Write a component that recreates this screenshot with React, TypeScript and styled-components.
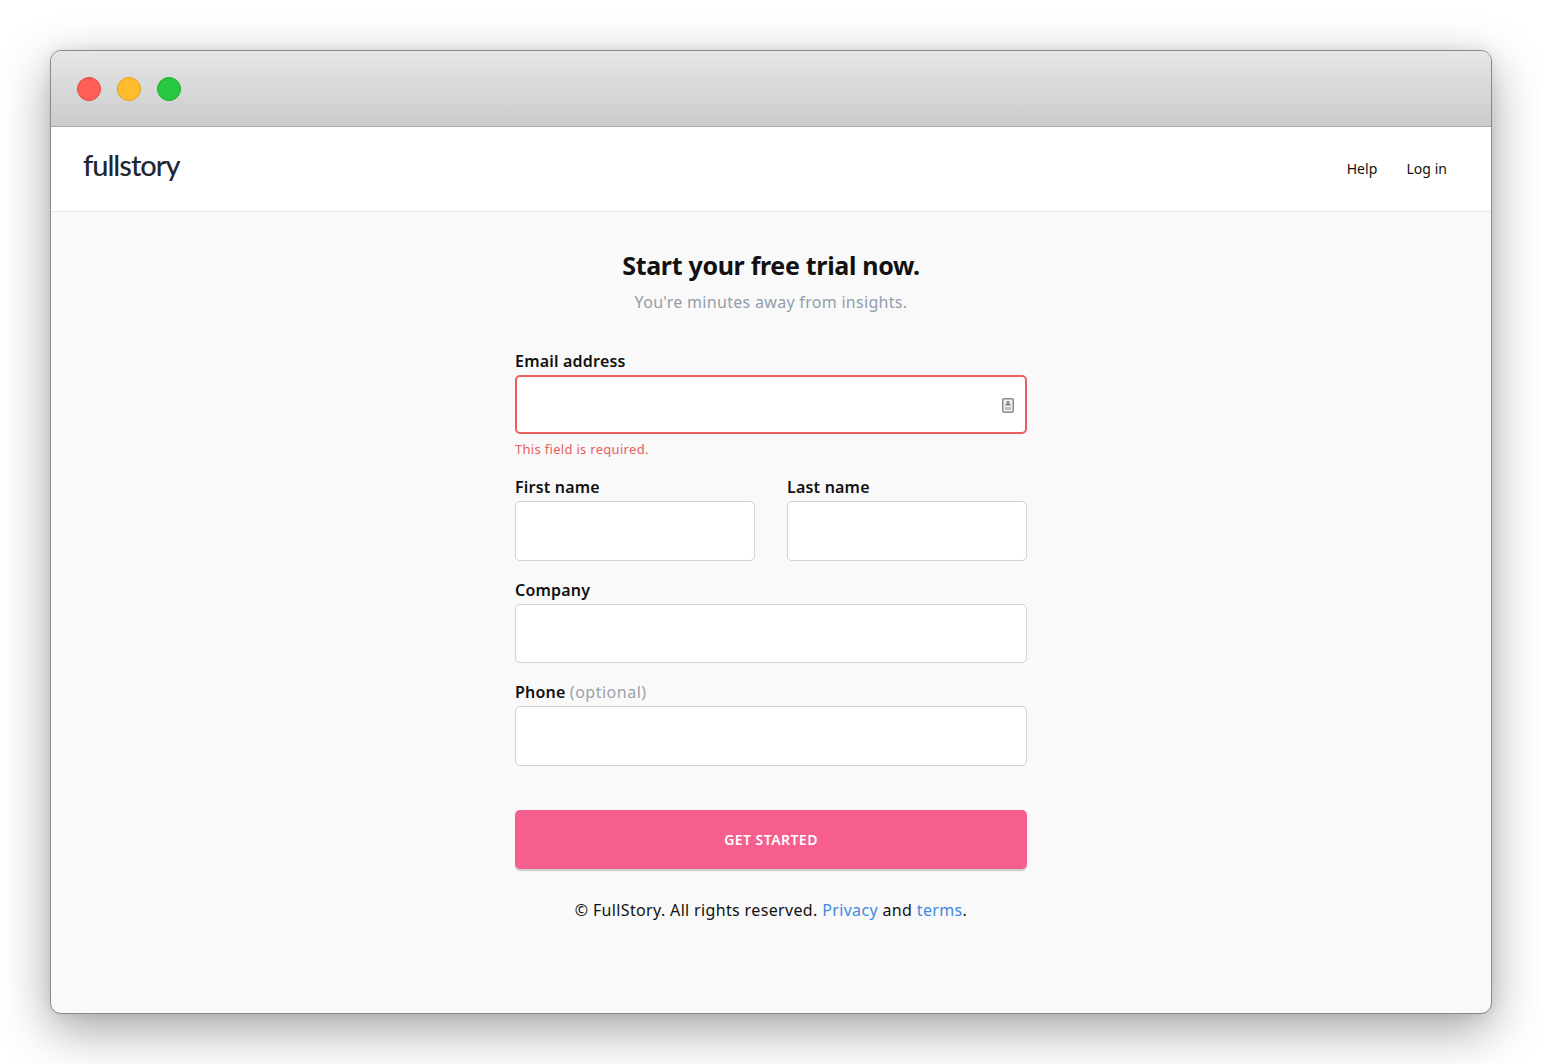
import React from "react";
import styled, { createGlobalStyle } from "styled-components";

const GlobalStyle = createGlobalStyle`
  html, body {
    margin: 0;
    padding: 0;
    background: #ffffff;
    overflow: hidden;
  }
  * {
    box-sizing: border-box;
  }
`;

const Page = styled.div`
  width: 1542px;
  height: 1064px;
  padding: 50px;
  font-family: "Noto Sans", "Open Sans", sans-serif;
`;

const Window = styled.div`
  width: 1442px;
  height: 964px;
  display: flex;
  flex-direction: column;
  border: 1px solid #8a8a8a;
  border-radius: 11px;
  overflow: hidden;
  background: #f9f9f9;
  box-shadow: 0 16px 50px rgba(0, 0, 0, 0.36), 0 0 12px rgba(0, 0, 0, 0.08);
`;

const TitleBar = styled.div`
  flex: none;
  height: 76px;
  display: flex;
  align-items: center;
  gap: 16px;
  padding-left: 26px;
  background: linear-gradient(#e6e6e6, #cbcbcb);
  border-bottom: 1px solid #a8a8a8;
`;

const Light = styled.span<{ $fill: string; $edge: string }>`
  width: 24px;
  height: 24px;
  border-radius: 50%;
  background: ${(p) => p.$fill};
  border: 1px solid ${(p) => p.$edge};
`;

const Nav = styled.header`
  flex: none;
  height: 85px;
  display: flex;
  align-items: center;
  justify-content: space-between;
  padding: 0 44px 0 32px;
  background: #ffffff;
  border-bottom: 1px solid #e6e6e6;
`;

const Logo = styled.div`
  font-family: Lato, sans-serif;
  font-size: 29px;
  font-weight: 500;
  letter-spacing: -1px;
  color: #1f2733;
  margin-top: -9px;
`;

const NavLinks = styled.nav`
  display: flex;
  gap: 29px;
  margin-top: -2px;
`;

const NavLink = styled.a`
  font-size: 14px;
  letter-spacing: 0.05px;
  color: #111111;
`;

const Main = styled.main`
  flex: 1;
  display: flex;
  flex-direction: column;
  align-items: center;
  padding-top: 35px;
`;

const Heading = styled.h1`
  margin: 0;
  font-size: 25px;
  line-height: 36px;
  font-weight: 700;
  letter-spacing: -0.32px;
  color: #111111;
`;

const Sub = styled.p`
  margin: 6px 0 0;
  font-size: 16px;
  line-height: 26px;
  letter-spacing: 0.3px;
  color: #919eab;
`;

const Form = styled.form`
  width: 512px;
  margin-top: 33px;
  display: flex;
  flex-direction: column;
`;

const Field = styled.div<{ $top?: number }>`
  flex: 1;
  display: flex;
  flex-direction: column;
  margin-top: ${(p) => p.$top ?? 0}px;
`;

const Row = styled.div<{ $top: number }>`
  display: flex;
  gap: 32px;
  margin-top: ${(p) => p.$top}px;
`;

const Label = styled.label`
  font-size: 16px;
  line-height: 27px;
  font-weight: 600;
  letter-spacing: 0.2px;
  color: #111111;
`;

const Optional = styled.span`
  font-weight: 400;
  letter-spacing: 0.5px;
  color: #9aa1a9;
`;

const Input = styled.div<{ $height?: number; $error?: boolean }>`
  height: ${(p) => p.$height ?? 60}px;
  background: #ffffff;
  border: ${(p) => (p.$error ? "2px solid #e66060" : "1px solid #c9d3dd")};
  border-radius: 5px;
  display: flex;
  align-items: center;
  justify-content: flex-end;
  padding-right: 11px;
`;

const ContactGlyph = styled.svg`
  margin-top: 1px;
`;

const ErrorText = styled.div`
  font-size: 13px;
  line-height: 18px;
  margin-top: 6px;
  letter-spacing: 0.3px;
  color: #e66060;
`;

const Button = styled.button`
  height: 59px;
  margin-top: 44px;
  border: none;
  border-radius: 5px;
  background: #f65e8d;
  box-shadow: 0 2px 1px rgba(0, 0, 0, 0.18);
  color: #ffffff;
  font-family: inherit;
  font-size: 14px;
  font-weight: 600;
  letter-spacing: 0.45px;
`;

const Footer = styled.p`
  margin: 28px 0 0;
  font-size: 16px;
  line-height: 26px;
  letter-spacing: 0.35px;
  color: #111111;
  text-align: center;
`;

const TextLink = styled.a`
  color: #4288e0;
`;

function ContactIcon() {
  return (
    <ContactGlyph width="12" height="15" viewBox="0 0 12 15">
      <rect x="0.75" y="0.75" width="10.5" height="13.5" rx="1.5" fill="#efefef" stroke="#8a8a8a" strokeWidth="1.5" />
      <rect x="4.8" y="3" width="2.4" height="2.6" fill="#7d7d7d" />
      <rect x="3.5" y="5.6" width="5" height="1.8" fill="#7d7d7d" />
      <rect x="3" y="9" width="6" height="3" fill="#bdbdbd" />
    </ContactGlyph>
  );
}

export default function App() {
  return (
    <Page>
      <GlobalStyle />
      <Window>
        <TitleBar>
          <Light $fill="#ff5f57" $edge="#e2463f" />
          <Light $fill="#ffbd2e" $edge="#e1a116" />
          <Light $fill="#28c840" $edge="#1aab29" />
        </TitleBar>
        <Nav>
          <Logo>fullstory</Logo>
          <NavLinks>
            <NavLink>Help</NavLink>
            <NavLink>Log in</NavLink>
          </NavLinks>
        </Nav>
        <Main>
          <Heading>Start your free trial now.</Heading>
          <Sub>You're minutes away from insights.</Sub>
          <Form>
            <Field>
              <Label>Email address</Label>
              <Input $error $height={59}>
                <ContactIcon />
              </Input>
              <ErrorText>This field is required.</ErrorText>
            </Field>
            <Row $top={16}>
              <Field>
                <Label>First name</Label>
                <Input />
              </Field>
              <Field>
                <Label>Last name</Label>
                <Input />
              </Field>
            </Row>
            <Field $top={16}>
              <Label>Company</Label>
              <Input $height={59} />
            </Field>
            <Field $top={16}>
              <Label>
                Phone <Optional>(optional)</Optional>
              </Label>
              <Input />
            </Field>
            <Button type="button">GET STARTED</Button>
          </Form>
          <Footer>
            © FullStory. All rights reserved. <TextLink>Privacy</TextLink> and <TextLink>terms</TextLink>.
          </Footer>
        </Main>
      </Window>
    </Page>
  );
}
